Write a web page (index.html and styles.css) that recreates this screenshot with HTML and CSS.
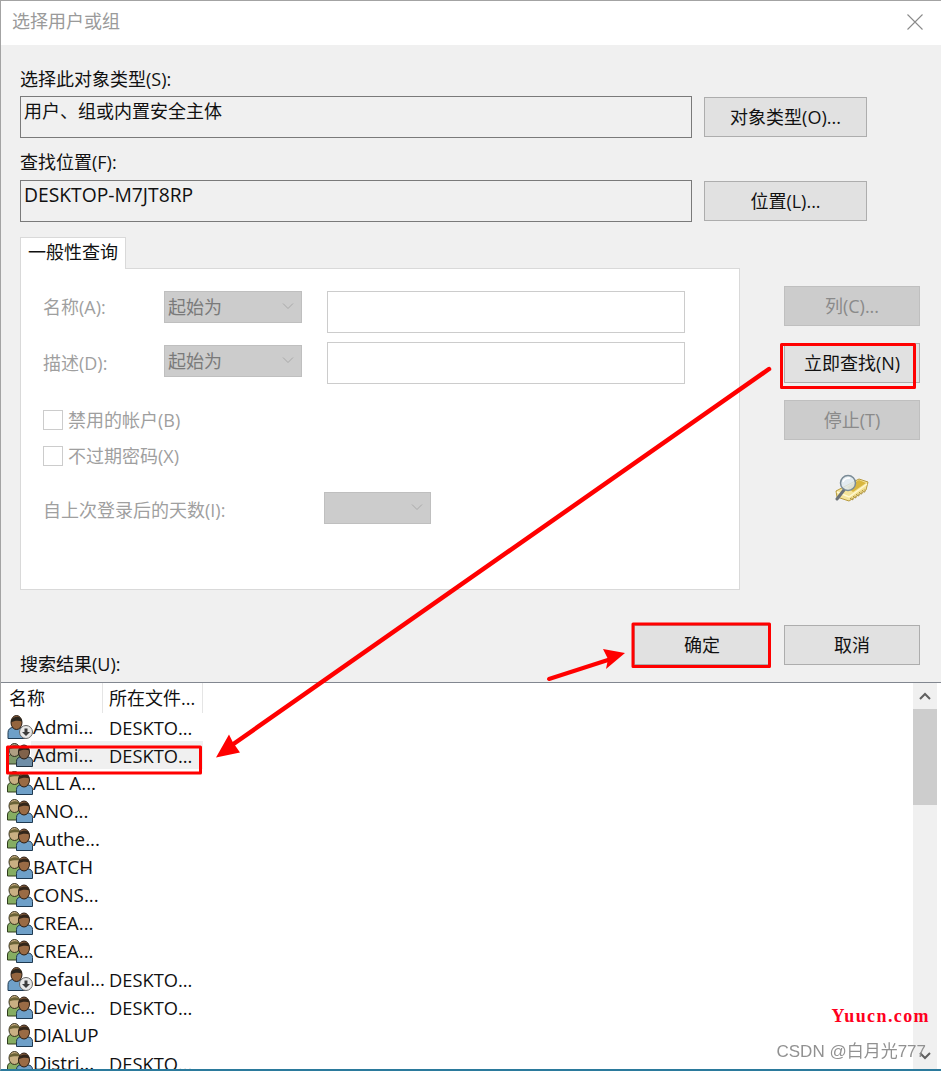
FILE: index.html
```html
<!DOCTYPE html>
<html lang="zh-CN">
<head>
<meta charset="utf-8">
<title>选择用户或组</title>
<link rel="stylesheet" href="styles.css">
</head>
<body>
<svg class="defs" width="0" height="0" aria-hidden="true">
  <defs>
    <symbol id="group" viewBox="0 0 26 24">
      <path d="M0.500 21v-5c0-3 2-4.500 4-4.500h6c3 0 4 2 4 4.500v5z" fill="#86ad62" stroke="#2f3d1c" stroke-width="1"/>
      <ellipse cx="7.500" cy="7" rx="5.500" ry="6.500" fill="#c9b083" stroke="#36301c" stroke-width="1"/>
      <path d="M2 6.500c0-5 11-6 11-1-3-.5-8-.5-11 1z" fill="#6a6236"/>
      <path d="M9.500 23.500v-5c0-3 2-4.500 4.500-4.500h7c3 0 4.500 2 4.500 4.500v5z" fill="#6fa0c8" stroke="#1f3a52" stroke-width="1"/>
      <ellipse cx="17" cy="9" rx="5.500" ry="7" fill="#9a6b45" stroke="#2a1c12" stroke-width="1"/>
      <path d="M11.500 8.500c0-6 11-7 11-1-3-1-8-1-11 1z" fill="#33261a"/>
    </symbol>
    <symbol id="user" viewBox="0 0 26 24">
      <path d="M1 23.500v-6c0-3 2-5 5-5h7c3 0 5 2 5 5v6z" fill="#6fa0c8" stroke="#1f3a52" stroke-width="1"/>
      <ellipse cx="9.500" cy="7.500" rx="5.500" ry="7" fill="#94653f" stroke="#2a1c12" stroke-width="1"/>
      <path d="M4 7.500c0-7 11-8 11-1-3-1-8-1-11 1z" fill="#2b261e"/>
      <circle cx="19" cy="17" r="6.500" fill="#e8e8e8" stroke="#666" stroke-width="1"/>
      <path d="M17.500 13.500h3v3.500h2.500l-4 4-4-4h2.500z" fill="#3c3c3c"/>
    </symbol>
    <symbol id="chev" viewBox="0 0 12 8">
      <path d="M1 1.500l5 5 5-5" fill="none" stroke="#a9a9a9" stroke-width="1"/>
    </symbol>
  </defs>
</svg>

<div class="window">
  <header class="titlebar">
    <span class="title">选择用户或组</span>
    <svg class="close" viewBox="0 0 16 16"><path d="M0.500 0.500l15 15M15.500 0.500l-15 15" stroke="#8a8a8a" stroke-width="1.100" fill="none"/></svg>
  </header>

  <main class="content">
    <div class="label first">选择此对象类型(S):</div>
    <div class="picker">
      <div class="readonly">用户、组或内置安全主体</div>
      <button class="btn">对象类型(O)...</button>
    </div>
    <div class="label second">查找位置(F):</div>
    <div class="picker">
      <div class="readonly latin">DESKTOP-M7JT8RP</div>
      <button class="btn">位置(L)...</button>
    </div>

    <div class="query">
      <section class="query-left">
        <div class="tab">一般性查询</div>
        <div class="panel">
          <div class="qrow">
            <span class="dim">名称(A):</span>
            <div class="select"><span>起始为</span><svg class="chev"><use href="#chev"/></svg></div>
            <span class="input"></span>
          </div>
          <div class="qrow two">
            <span class="dim">描述(D):</span>
            <div class="select"><span>起始为</span><svg class="chev"><use href="#chev"/></svg></div>
            <span class="input"></span>
          </div>
          <div class="check c1"><span class="box"></span><span class="dim">禁用的帐户(B)</span></div>
          <div class="check c2"><span class="box"></span><span class="dim">不过期密码(X)</span></div>
          <div class="days">
            <span class="dim days-label">自上次登录后的天数(I):</span>
            <div class="select small"><span></span><svg class="chev"><use href="#chev"/></svg></div>
          </div>
        </div>
      </section>
      <aside class="query-right">
        <button class="btn off">列(C)...</button>
        <button class="btn">立即查找(N)</button>
        <button class="btn off">停止(T)</button>
        <svg class="finder" viewBox="0 0 34 28">
          <path d="M1 17L24 5l9 3-2 8L14 27 2 23z" fill="#f5e49a" stroke="#b79a3e" stroke-width="1"/>
          <path d="M12 13l12-7 7 3-13 9z" fill="#d9b63e"/>
          <path d="M2 18l12 5 18-13" fill="none" stroke="#fff8d2" stroke-width="1.500"/>
          <path d="M15 25l15-10M17 26l14-9" stroke="#a78a32" stroke-width="1" stroke-dasharray="2 1.500" fill="none"/>
          <path d="M2 25l7-9" stroke="#6b7278" stroke-width="3" stroke-linecap="round"/>
          <circle cx="13" cy="9" r="7.500" fill="#dfeaf0" fill-opacity=".85" stroke="#7a8b96" stroke-width="1.500"/>
          <path d="M8 8c1-3 4-4 7-4" stroke="#fff" stroke-width="1.500" fill="none"/>
        </svg>
      </aside>
    </div>

    <div class="footer-row">
      <div class="label results">搜索结果(U):</div>
      <div class="actions">
        <button class="btn">确定</button>
        <button class="btn">取消</button>
      </div>
    </div>
  </main>

  <section class="list">
    <div class="rows">
      <div class="head"><span class="h1">名称</span><span class="h2">所在文件...</span></div>
      <div class="row"><svg class="ico"><use href="#user"/></svg><span class="n">Admi...</span><span class="f">DESKTO...</span></div>
      <div class="row sel"><svg class="ico"><use href="#group"/></svg><span class="n">Admi...</span><span class="f">DESKTO...</span></div>
      <div class="row"><svg class="ico"><use href="#group"/></svg><span class="n">ALL A...</span></div>
      <div class="row"><svg class="ico"><use href="#group"/></svg><span class="n">ANO...</span></div>
      <div class="row"><svg class="ico"><use href="#group"/></svg><span class="n">Authe...</span></div>
      <div class="row"><svg class="ico"><use href="#group"/></svg><span class="n">BATCH</span></div>
      <div class="row"><svg class="ico"><use href="#group"/></svg><span class="n">CONS...</span></div>
      <div class="row"><svg class="ico"><use href="#group"/></svg><span class="n">CREA...</span></div>
      <div class="row"><svg class="ico"><use href="#group"/></svg><span class="n">CREA...</span></div>
      <div class="row"><svg class="ico"><use href="#user"/></svg><span class="n">Defaul...</span><span class="f">DESKTO...</span></div>
      <div class="row"><svg class="ico"><use href="#group"/></svg><span class="n">Devic...</span><span class="f">DESKTO...</span></div>
      <div class="row"><svg class="ico"><use href="#group"/></svg><span class="n">DIALUP</span></div>
      <div class="row"><svg class="ico"><use href="#group"/></svg><span class="n">Distri...</span><span class="f">DESKTO...</span></div>
    </div>
    <div class="scrollbar">
      <div class="sb-up"><svg viewBox="0 0 12 8"><path d="M1 7l5-5 5 5" fill="none" stroke="#606060" stroke-width="2"/></svg></div>
      <div class="sb-thumb"></div>
      <div class="sb-down"><svg viewBox="0 0 12 8"><path d="M1 1l5 5 5-5" fill="none" stroke="#606060" stroke-width="2"/></svg></div>
    </div>
  </section>

  <svg class="marks" viewBox="0 0 941 1071" aria-hidden="true">
    <g fill="none" stroke="#ff0000" stroke-width="3" stroke-linejoin="round">
      <rect x="781.500" y="344.500" width="133" height="43"/>
      <rect x="633" y="624" width="136.500" height="42.500"/>
      <rect x="7.500" y="747" width="193" height="26"/>
    </g>
    <g stroke="#ff0000" stroke-linecap="round" fill="#ff0000">
      <path d="M769 369L232 745" stroke-width="4.500" fill="none"/>
      <path d="M216 757.500l13-23 4 8 7 10z" stroke="none"/>
      <path d="M549 679l62-20" stroke-width="4" fill="none"/>
      <path d="M625 653l-22-4 5 10-2 10z" stroke="none"/>
    </g>
  </svg>

  <div class="wm-site">Yuucn.com</div>
  <div class="wm-csdn">CSDN @白月光777</div>
</div>
</body>
</html>
```
FILE: styles.css
```css
* { box-sizing: border-box; }
html, body { margin: 0; padding: 0; background: #fff; }
body { width: 941px; height: 1071px; overflow: hidden; }
.defs { position: absolute; }

.window {
  position: relative;
  width: 941px;
  height: 1071px;
  display: flex;
  flex-direction: column;
  overflow: hidden;
  background: #f0f0f0;
  border-top: 1px solid #a3a3a3;
  border-left: 1px solid #a3a3a3;
  border-bottom: 2px solid #2b7a9c;
  font-family: "Open Sans", "Noto Sans CJK SC", sans-serif;
  font-size: 18px;
  color: #111;
}

.titlebar {
  flex: none;
  height: 44px;
  background: #fff;
  display: flex;
  align-items: center;
  justify-content: space-between;
  padding: 0 18px 0 11px;
}
.title { font-size: 18px; color: #9a9a9a; line-height: 20px; margin-bottom: 4px; }
.close { width: 16px; height: 16px; margin-bottom: 2px; }

.content { flex: none; padding: 0 21px 0 19px; }

.label { line-height: 24px; height: 24px; }
.label.first { margin-top: 22px; margin-bottom: 5px; }
.label.second { margin-top: 12px; margin-bottom: 6px; }

.picker {
  display: grid;
  grid-template-columns: 672px 163px;
  column-gap: 12px;
}
.readonly {
  height: 42px;
  border: 1px solid #7a7a7a;
  padding: 2px 3px;
  line-height: 24px;
}
.readonly.latin { font-size: 19.300px; line-height: 23px; }
.btn {
  display: block;
  height: 40px;
  margin: 1px 0;
  padding: 0 0 2px;
  background: #e1e1e1;
  border: 1px solid #adadad;
  font: inherit;
  color: #111;
}
.btn.off { background: #ccc; border-color: #bfbfbf; color: #8a8a8a; }

.query {
  display: grid;
  grid-template-columns: 720px 136px;
  column-gap: 44px;
  margin-top: 15px;
}
.tab {
  width: 106px;
  height: 32px;
  background: #fff;
  border: 1px solid #d9d9d9;
  border-bottom: 0;
  padding-left: 7px;
  line-height: 29px;
  position: relative;
  z-index: 1;
}
.panel {
  height: 322px;
  margin-top: -1px;
  background: #fff;
  border: 1px solid #d9d9d9;
  padding: 22px 0 0 22px;
}
.dim { color: #9f9f9f; }
.qrow {
  display: grid;
  grid-template-columns: 121px 138px 358px;
  align-items: start;
  height: 42px;
}
.qrow .dim { line-height: 32px; }
.qrow .input { margin-left: 25px; width: 358px; }
.qrow.two { margin-top: 9px; }
.qrow.two .select { margin-top: 3px; }
.qrow.two .dim { margin-top: 5px; }
.select {
  height: 32px;
  background: #ccc;
  border: 1px solid #bfbfbf;
  display: flex;
  align-items: center;
  justify-content: space-between;
  padding: 0 7px 2px 3px;
  color: #7a7a7a;
}
.select.small { width: 107px; }
.chev { width: 12px; height: 8px; }
.input {
  display: block;
  height: 42px;
  background: #fff;
  border: 1px solid #ccc;
}
.check { display: flex; align-items: center; height: 20px; gap: 5px; }
.check .dim { line-height: 18px; }
.check.c1 { margin-top: 26px; }
.check.c2 { margin-top: 16px; }
.box { width: 20px; height: 20px; border: 1px solid #ccc; background: #fff; flex: none; }
.days { display: flex; align-items: center; height: 32px; margin-top: 26px; }
.days-label { width: 281px; padding-top: 2px; }

.query-right {
  display: flex;
  flex-direction: column;
  padding-top: 49px;
  gap: 17px;
  align-items: stretch;
}
.query-right .btn { margin: 0; }
.finder { width: 34px; height: 28px; margin: 17px 0 0 51px; }

.footer-row {
  display: flex;
  justify-content: space-between;
  align-items: flex-end;
  height: 57px;
  margin-top: 35px;
}
.label.results { line-height: 36px; height: 36px; }
.actions { align-self: flex-start; display: flex; gap: 14px; }
.actions .btn { margin: 0; width: 136px; }

.list {
  flex: 1;
  min-height: 0;
  display: flex;
  background: #fff;
  border-top: 1px solid #828790;
  overflow: hidden;
}
.rows { width: 912px; overflow: hidden; }
.head { display: flex; height: 30px; line-height: 30px; }
.h1 { width: 102px; padding-left: 8px; border-right: 1px solid #e5e5e5; }
.h2 { width: 100px; padding-left: 6px; border-right: 1px solid #e5e5e5; }
.row { display: flex; align-items: center; height: 28px; font-size: 18.800px; }
.row.sel { background: linear-gradient(to right, #fff 30px, #f0f0f0 30px, #f0f0f0 202px, #fff 202px); }
.row.sel .ico { filter: saturate(.7) brightness(.9); }
.ico { width: 26px; height: 24px; margin-left: 6px; flex: none; }
.n { width: 76px; white-space: nowrap; flex: none; }
.f { white-space: nowrap; font-size: 18.300px; }

.scrollbar {
  width: 24px;
  background: #f0f0f0;
  display: flex;
  flex-direction: column;
}
.sb-up { height: 26px; display: flex; align-items: center; justify-content: center; }
.sb-up svg, .sb-down svg { width: 12px; height: 8px; }
.sb-thumb { height: 96px; background: #cdcdcd; }
.sb-down { margin-top: auto; height: 26px; display: flex; align-items: center; justify-content: center; }

.marks {
  position: absolute;
  left: -1px;
  top: -1px;
  width: 941px;
  height: 1071px;
  pointer-events: none;
}
.wm-site {
  position: absolute;
  right: 11px;
  bottom: 42px;
  font-family: "Liberation Serif", serif;
  font-weight: bold;
  font-size: 18px;
  letter-spacing: 1.400px;
  color: #ff0020;
}
.wm-csdn {
  position: absolute;
  right: 15px;
  bottom: 7px;
  font-family: "Liberation Sans", "Noto Sans CJK SC", sans-serif;
  font-size: 17px;
  color: #8c8c8c;
  opacity: .95;
}
```
